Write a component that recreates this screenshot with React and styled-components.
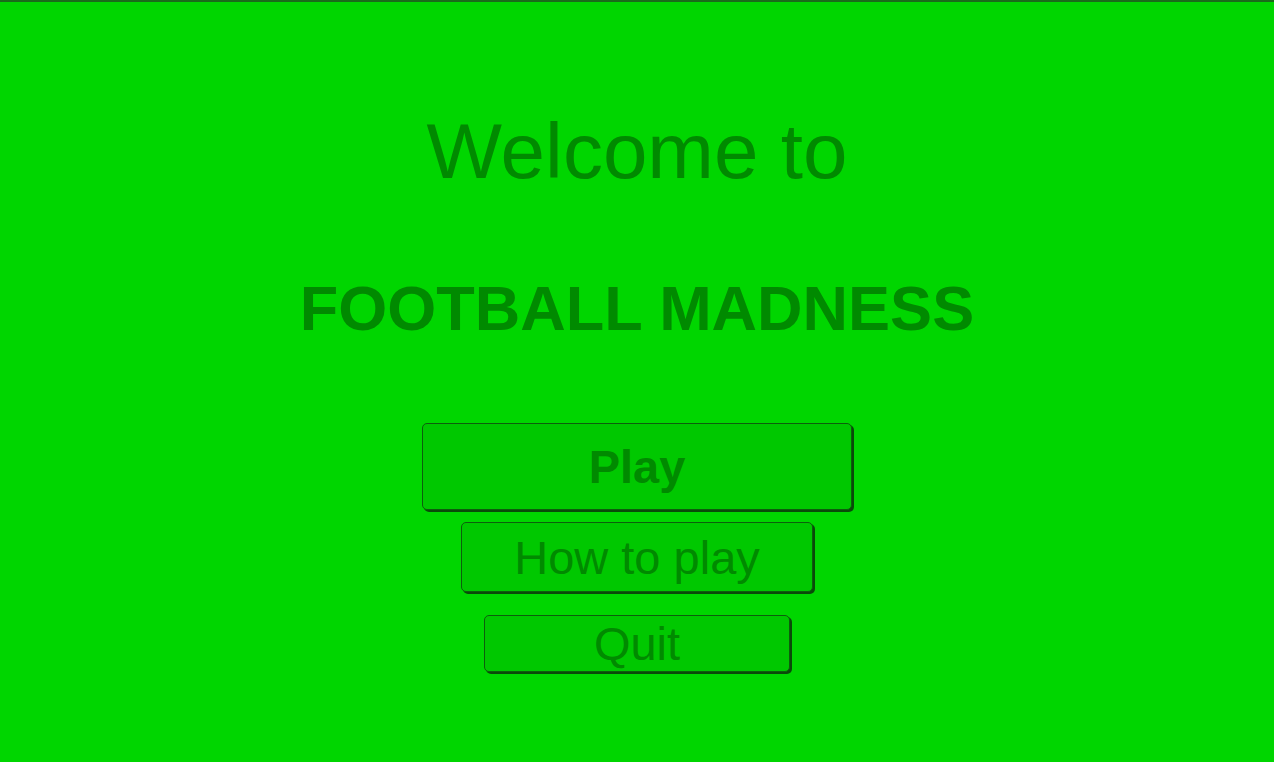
import React from 'react'
import styled, { createGlobalStyle } from 'styled-components'

const GlobalStyle = createGlobalStyle`
  html, body {
    margin: 0;
    padding: 0;
    background: #00d600;
  }
  * { box-sizing: border-box; }
`

const Screen = styled.div`
  width: 1274px;
  height: 762px;
  background: #00d600;
  border-top: 2px solid #1b6b1b;
  display: flex;
  flex-direction: column;
  align-items: center;
  font-family: 'Liberation Sans', Arial, sans-serif;
  color: #008a00;
`

const Welcome = styled.h1`
  margin: 104px 0 0;
  font-size: 80px;
  font-weight: 400;
  line-height: 92px;
  transform: scaleY(0.98);
`

const Title = styled.h2`
  margin: 74px 0 0;
  font-size: 63px;
  font-weight: 700;
  line-height: 72px;
`

const Menu = styled.div`
  margin-top: 79px;
  display: flex;
  flex-direction: column;
  align-items: center;
`

const MenuButton = styled.button`
  width: ${(p) => p.w}px;
  height: ${(p) => p.h}px;
  margin-top: ${(p) => p.gap || 0}px;
  background: #00c800;
  border: 1px solid #0d5e0d;
  border-radius: 5px;
  box-shadow: 2px 2px 0 #0a4a0a;
  font-family: inherit;
  font-size: ${(p) => p.size}px;
  font-weight: ${(p) => (p.bold ? 700 : 400)};
  color: #008a00;
  display: flex;
  align-items: center;
  justify-content: center;
  padding: 0;
  line-height: 1;
  cursor: pointer;
`

export default function App() {
  return (
    <>
      <GlobalStyle />
      <Screen>
        <Welcome>Welcome to</Welcome>
        <Title>FOOTBALL MADNESS</Title>
        <Menu>
          <MenuButton w={430} h={87} size={47} bold>
            Play
          </MenuButton>
          <MenuButton w={352} h={70} size={47} gap={12}>
            How to play
          </MenuButton>
          <MenuButton w={306} h={57} size={47} gap={23}>
            Quit
          </MenuButton>
        </Menu>
      </Screen>
    </>
  )
}
